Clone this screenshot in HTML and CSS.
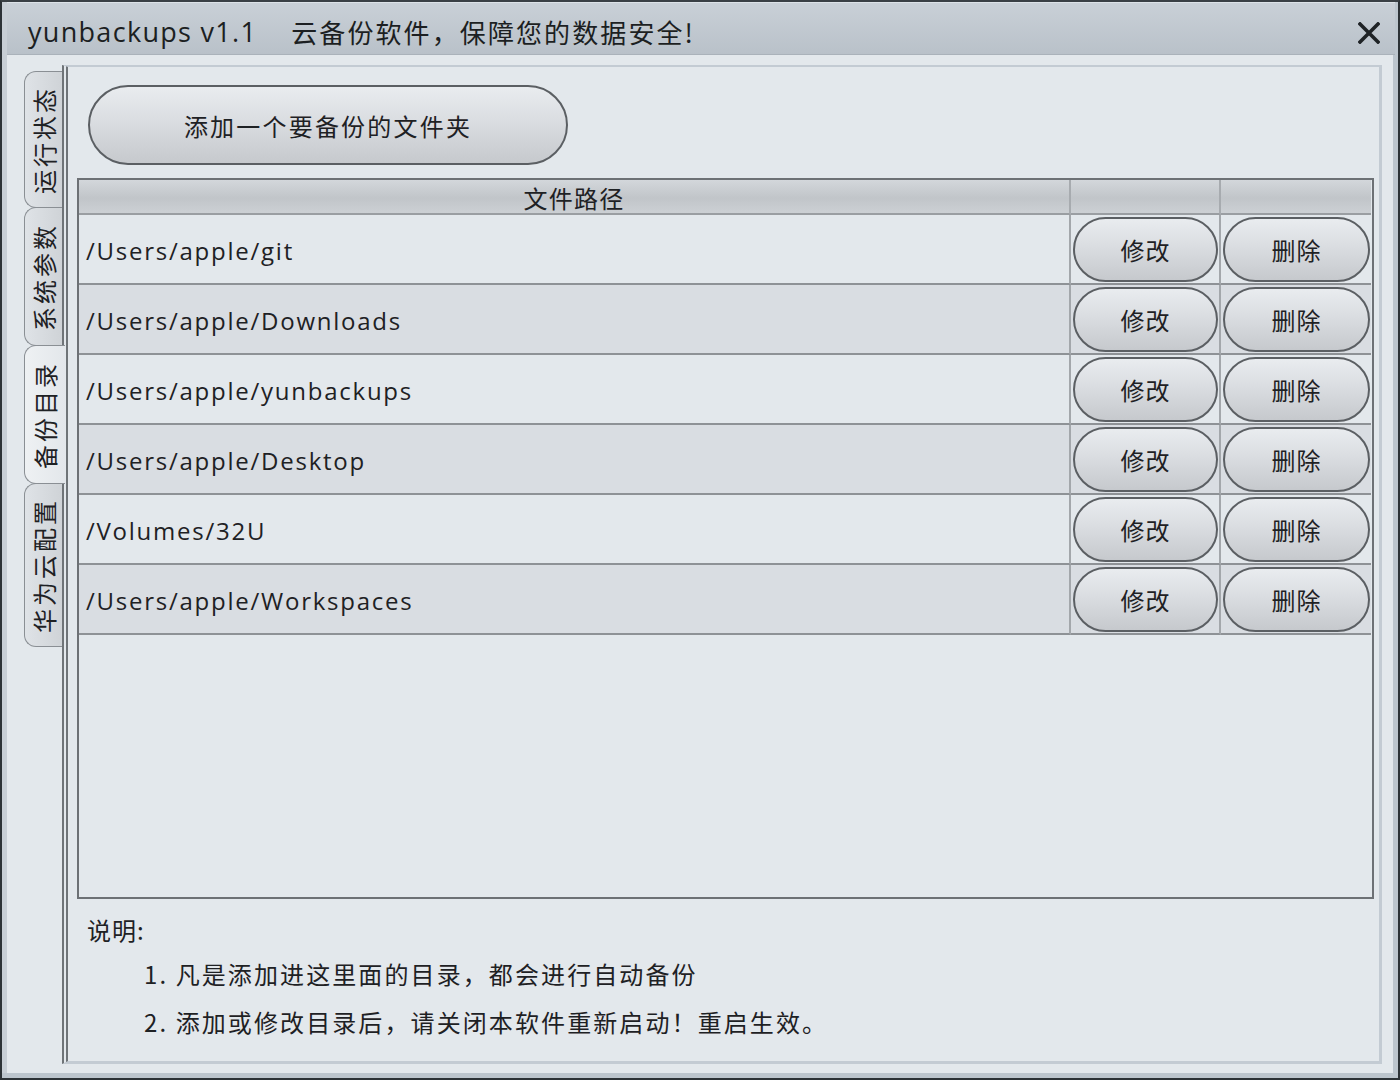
FILE: index.html
```html
<!DOCTYPE html>
<html lang="zh">
<head>
<meta charset="utf-8">
<title>yunbackups</title>
<link rel="stylesheet" href="styles.css">
</head>
<body>
<div class="window">
  <div class="titlebar">
    <span class="app-name">yunbackups v1.1</span>
    <span class="app-slogan">云备份软件，保障您的数据安全!</span>
    <svg class="close" width="22" height="22" viewBox="0 0 22 22"><path d="M2 2 L20 20 M20 2 L2 20" stroke="#1f2326" stroke-width="3.6" stroke-linecap="square"/></svg>
  </div>
  <div class="body">
    <div class="tabs">
      <div class="tab t1"><span>运行状态</span></div>
      <div class="tab t2"><span>系统参数</span></div>
      <div class="tab t3 active"><span>备份目录</span></div>
      <div class="tab t4"><span>华为云配置</span></div>
    </div>
    <div class="panel">
      <button class="pill big">添加一个要备份的文件夹</button>
      <div class="table">
        <div class="th">文件路径</div><div class="th"></div><div class="th last"></div>
        <div class="td path">/Users/apple/git</div><div class="td"><button class="pill">修改</button></div><div class="td last"><button class="pill">删除</button></div>
        <div class="td path alt">/Users/apple/Downloads</div><div class="td alt"><button class="pill">修改</button></div><div class="td alt last"><button class="pill">删除</button></div>
        <div class="td path">/Users/apple/yunbackups</div><div class="td"><button class="pill">修改</button></div><div class="td last"><button class="pill">删除</button></div>
        <div class="td path alt">/Users/apple/Desktop</div><div class="td alt"><button class="pill">修改</button></div><div class="td alt last"><button class="pill">删除</button></div>
        <div class="td path">/Volumes/32U</div><div class="td"><button class="pill">修改</button></div><div class="td last"><button class="pill">删除</button></div>
        <div class="td path alt">/Users/apple/Workspaces</div><div class="td alt"><button class="pill">修改</button></div><div class="td alt last"><button class="pill">删除</button></div>
      </div>
      <div class="notes">
        <div class="note-title">说明:</div>
        <div class="note first">1. 凡是添加进这里面的目录，都会进行自动备份</div>
        <div class="note">2. 添加或修改目录后，请关闭本软件重新启动！重启生效。</div>
      </div>
    </div>
  </div>
</div>
</body>
</html>
```

FILE: styles.css
```css
* { box-sizing: border-box; }
html, body { margin: 0; padding: 0; }
body {
  width: 1400px;
  height: 1080px;
  background: #e3e8ec;
  font-family: "Open Sans", "Noto Sans CJK SC", sans-serif;
  color: #1e2124;
  overflow: hidden;
}
.window {
  width: 1400px;
  height: 1080px;
  border: 2px solid #2c3236;
  border-top-color: #3a4045;
  background: #e3e8ec;
  box-shadow: inset -5px -5px 0 #bcc5cd, inset 5px 0 0 #c7ced5;
  display: flex;
  flex-direction: column;
}
.titlebar {
  height: 53px;
  flex: none;
  margin: 0 3px 0 5px;
  background: linear-gradient(#c9d0d7, #b9c1c9);
  border-top: 1px solid #dde3e8;
  border-bottom: 1px solid #aab2ba;
  display: flex;
  align-items: center;
  padding: 5px 0 0 21px;
  font-size: 27px;
  color: #1c1f22;
  position: relative;
}
.app-name { letter-spacing: 1.3px; }
.app-slogan {
  margin-left: 34px;
  font-family: "Noto Sans CJK SC", sans-serif;
  font-size: 26px;
  letter-spacing: 2.1px;
}
.close {
  position: absolute;
  right: 15px;
  top: 19px;
}
.body {
  flex: 1;
  display: flex;
  padding: 10px 16px 14px 22px;
}
.tabs {
  width: 38px;
  flex: none;
  margin-top: 6px;
  display: flex;
  flex-direction: column;
}
.tab {
  width: 38px;
  border: 1px solid #8a8f94;
  border-right: none;
  border-radius: 12px 0 0 12px;
  background: linear-gradient(90deg, #dfe3e7, #cfd3d7);
  display: flex;
  align-items: center;
  justify-content: center;
  margin-bottom: -1px;
}
.tab span {
  writing-mode: vertical-rl;
  text-orientation: sideways;
  transform: rotate(180deg);
  font-family: "Noto Sans CJK SC", sans-serif;
  font-size: 24px;
  letter-spacing: 3px;
  color: #1e2124;
  line-height: 1;
}
.t1 { height: 137px; }
.t2 { height: 139px; }
.t3 { height: 139px; }
.t4 { height: 164px; }
.tab.active {
  background: linear-gradient(90deg, #eef1f3, #e3e7eb);
  width: 41px;
  margin-right: -3px;
  position: relative;
  z-index: 2;
}
.panel {
  flex: 1;
  border-left: 6px double #6f7478;
  border-top: 2px solid #c3cbd3;
  border-right: 3px solid #c3cbd3;
  border-bottom: 3px solid #c3cbd3;
  padding: 18px 5px 0 9px;
  display: flex;
  flex-direction: column;
}
.pill {
  font-family: "Noto Sans CJK SC", sans-serif;
  font-size: 24px;
  letter-spacing: 1px;
  color: #1e2124;
  border: 2px solid #5b5f63;
  background: linear-gradient(#e9ecef 0%, #dadde1 45%, #c6c9cd 100%);
  border-radius: 40px;
  padding: 0;
  cursor: pointer;
}
.big {
  width: 480px;
  height: 80px;
  margin-left: 11px;
  flex: none;
  letter-spacing: 2.2px;
  font-size: 24px;
}
.table {
  margin-top: 13px;
  height: 721px;
  border: 2px solid #6d7175;
  display: grid;
  grid-template-columns: 992px 150px 150px;
  grid-template-rows: 35px repeat(6, 70px);
  align-content: start;
}
.th {
  background: linear-gradient(#d3d7db 0%, #c1c5c9 55%, #ccd0d4 100%);
  border-right: 2px solid #a7abaf;
  border-bottom: 2px solid #9a9ea2;
  font-family: "Noto Sans CJK SC", sans-serif;
  font-size: 24px;
  letter-spacing: 1.2px;
  text-align: center;
  line-height: 36px;
  overflow: hidden;
}
.th.last, .td.last { border-right: none; }
.td {
  border-right: 2px solid #a3a7ab;
  border-bottom: 2px solid #8e9296;
  background: #e3e8ec;
  display: flex;
  padding: 2px 1px 1px 2px;
}
.td.alt { background: #d9dde2; }
.td .pill { width: 100%; height: 100%; border-radius: 34px; }
.td.path {
  align-items: center;
  padding: 2px 0 0 7px;
  font-size: 24px;
  letter-spacing: 1.75px;
}
.notes {
  padding: 14px 0 0 10px;
  font-family: "Noto Sans CJK SC", sans-serif;
  font-size: 24px;
  color: #1e2124;
}
.note-title { line-height: 34px; letter-spacing: 1px; }
.note {
  margin-left: 57px;
  line-height: 48px;
  letter-spacing: 2.1px;
}
.note.first { margin-top: 3px; }
```
